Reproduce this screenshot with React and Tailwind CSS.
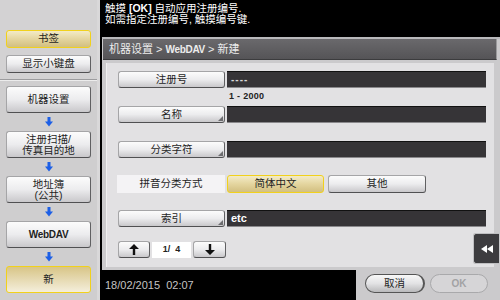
import React from "react";

const grayBtn =
  "bg-linear-to-b from-[#fcfcfc] via-[#ececee] to-[#c9c8cb] border border-[#a5a5a7] border-r-[#606062] border-b-[#505052] rounded-[3px]";
const yellowBtn =
  "bg-linear-to-b from-[#f3ebc7] via-[#e4d59f] to-[#d2bf80] border-[1.5px] border-[#f1d11c] rounded-[3px]";

function BlueArrow() {
  return (
    <svg width="8" height="10" viewBox="0 0 8 10">
      <rect x="2.5" y="0" width="3" height="5" fill="#1d5fe6" />
      <polygon points="0,4.5 8,4.5 4,9.5" fill="#1d5fe6" />
    </svg>
  );
}

function SideBtn({ children, yellow, className = "" }) {
  return (
    <div
      className={`h-[27px] flex items-center justify-center text-center text-[10.5px] leading-[11px] text-[#1e1e1e] ${
        yellow ? "bg-linear-to-b from-[#d8c587] to-[#f4eedb] border-[1.5px] border-[#f1d11c] rounded-[3px]" : grayBtn
      } ${className}`}
    >
      {children}
    </div>
  );
}

function Gap() {
  return (
    <div className="h-[18px] flex items-center justify-center">
      <BlueArrow />
    </div>
  );
}

function Corner() {
  return (
    <svg className="absolute right-[1px] bottom-[1px]" width="5" height="5" viewBox="0 0 5 5">
      <polygon points="5,0 5,5 0,5" fill="#6d6d70" />
    </svg>
  );
}

function Label({ children, corner }) {
  return (
    <div
      className={`relative w-[107px] h-[17px] flex items-center justify-center text-[10.5px] text-[#1e1e1e] ${grayBtn} rounded-[2px]`}
    >
      {children}
      {corner && <Corner />}
    </div>
  );
}

function Field({ children }) {
  return (
    <div className="ml-[2px] w-[259px] h-[17px] bg-[#363437] border-t border-t-[#111] border-b border-b-[#8a898c] flex items-center pl-[4px]">
      {children}
    </div>
  );
}

function ArrowUp() {
  return (
    <svg width="10" height="11" viewBox="0 0 10 11">
      <polygon points="5,0 10,5 6.2,5 6.2,11 3.8,11 3.8,5 0,5" fill="#111" />
    </svg>
  );
}
function ArrowDown() {
  return (
    <svg width="10" height="11" viewBox="0 0 10 11">
      <polygon points="5,11 10,6 6.2,6 6.2,0 3.8,0 3.8,6 0,6" fill="#111" />
    </svg>
  );
}

export default function App() {
  return (
    <div className="w-[500px] h-[300px] flex overflow-hidden font-['Liberation_Sans','Noto_Sans_CJK_SC',sans-serif]">
      {/* Sidebar */}
      <div className="w-[100px] shrink-0 h-full bg-[#cfcecf] flex flex-col border-r-[3px] border-r-[#d9d8d9]">
        <div className="h-[79px] px-[6px] pt-[30px] flex flex-col gap-[7px] bg-[#d3d2d3]">
          <div className={`h-[18px] flex items-center justify-center text-[10.5px] text-[#1e1e1e] ${yellowBtn}`}>
            书签
          </div>
          <div className={`h-[18px] flex items-center justify-center text-[10.5px] text-[#1e1e1e] ${grayBtn}`}>
            显示小键盘
          </div>
        </div>
        <div className="h-[2px] border-t border-t-[#9c9c9e] border-b border-b-[#ececec]" />
        <div className="px-[6px] pt-[5px] flex flex-col">
          <SideBtn>机器设置</SideBtn>
          <Gap />
          <SideBtn>
            注册扫描/
            <br />
            传真目的地
          </SideBtn>
          <Gap />
          <SideBtn>
            地址簿
            <br />
            (公共)
          </SideBtn>
          <Gap />
          <SideBtn className="font-bold text-[10px] tracking-[-0.3px]">WebDAV</SideBtn>
          <Gap />
          <SideBtn yellow>新</SideBtn>
        </div>
      </div>

      {/* Right */}
      <div className="w-[400px] shrink-0 h-full bg-black flex flex-col">
        <div className="h-[37px] pl-[5px] pt-[3px] text-white text-[10.5px] leading-[11px] whitespace-pre">
          <div>触摸 <span className="font-bold">[OK]</span> 自动应用注册编号.</div>
          <div>如需指定注册编号, 触摸编号键.</div>
        </div>

        <div className="relative ml-[2px] h-[233px] bg-[#cbcacc] border-t-[2px] border-t-[#b9b9bb] flex flex-col">
          <div className="ml-[1px] mr-[3px] h-[21px] bg-linear-to-b from-[#6a696c] to-[#555457] border-b border-b-[#3c3c3e] border-r border-r-[#9a9a9c] flex items-center pl-[6px] text-[11px] text-[#ececec]">
            机器设置 &gt; <span className="font-bold text-[10px] mx-[3px] tracking-[-0.3px]">WebDAV</span> &gt; 新建
          </div>
          <div className="ml-[4px] mt-[3px] w-[388px] h-[204px] bg-[#e2e1e3] border-l border-l-[#f0f0f0] pl-[11px] pt-[8px] flex flex-col">
            <div className="flex">
              <Label>注册号</Label>
              <Field>
                <span className="text-[#d8d8d8] text-[10px] font-bold tracking-[1px]">----</span>
              </Field>
            </div>
            <div className="h-[18px] pl-[111px] flex items-center text-[9px] font-bold text-[#222] tracking-[0.3px]">
              1 - 2000
            </div>
            <div className="flex">
              <Label corner>名称</Label>
              <Field />
            </div>
            <div className="h-[18px]" />
            <div className="flex">
              <Label corner>分类字符</Label>
              <Field />
            </div>
            <div className="h-[17px]" />
            <div className="flex items-center h-[18px]">
              <div className="w-[108px] -ml-[1px] h-[18px] bg-[#f4f3f5] flex items-center justify-center text-[10.5px] text-[#1e1e1e]">
                拼音分类方式
              </div>
              <div className={`ml-[2px] w-[97px] h-[18px] flex items-center justify-center text-[10.5px] text-[#1e1e1e] ${yellowBtn}`}>
                简体中文
              </div>
              <div className={`ml-[4px] w-[98px] h-[18px] flex items-center justify-center text-[10.5px] text-[#1e1e1e] ${grayBtn}`}>
                其他
              </div>
            </div>
            <div className="h-[17px]" />
            <div className="flex">
              <Label corner>索引</Label>
              <Field>
                <span className="text-white text-[11px] font-bold">etc</span>
              </Field>
            </div>
            <div className="h-[14px]" />
            <div className="flex items-center h-[17px]">
              <div className={`w-[32px] h-[17px] flex items-center justify-center ${grayBtn} rounded-[2px]`}>
                <ArrowUp />
              </div>
              <div className="ml-[2px] w-[39px] h-[16px] bg-white flex items-center justify-center text-[9px] font-bold text-[#222] whitespace-pre">
                1/  4
              </div>
              <div className={`ml-[2px] w-[33px] h-[17px] flex items-center justify-center ${grayBtn} rounded-[2px]`}>
                <ArrowDown />
              </div>
            </div>
          </div>

          <div className="absolute left-[371px] top-[194px] w-[26px] h-[31px] bg-[#3d3c3f] rounded-l-[3px] border border-[#c0c0c2] border-r-0 flex items-center justify-center">
            <svg width="12" height="8" viewBox="0 0 12 8">
              <polygon points="0,4 6,0 6,8" fill="#fff" />
              <polygon points="6,4 12,0 12,8" fill="#fff" />
            </svg>
          </div>
        </div>

        <div className="flex h-[30px]">
          <div className="w-[256px] bg-black flex items-center pl-[5px] pt-[1px] text-[11px] text-[#c4c4c4] whitespace-pre">
            18/02/2015  02:07
          </div>
          <div className="flex-1 bg-[#cbcacc] flex items-start pl-[9px] pt-[4px] gap-[5px]">
            <div className="w-[60px] h-[19px] rounded-full bg-linear-to-b from-[#f8f8f8] via-[#e2e2e4] to-[#b9b9bb] border border-[#555] border-r-[2px] flex items-center justify-center text-[10.5px] text-[#1e1e1e]">
              取消
            </div>
            <div className="w-[58px] h-[19px] rounded-full bg-[#d6d5d7] border border-[#a9a9ab] flex items-center justify-center text-[10px] font-bold text-[#a2a2a4]">
              OK
            </div>
          </div>
        </div>
      </div>
    </div>
  );
}
